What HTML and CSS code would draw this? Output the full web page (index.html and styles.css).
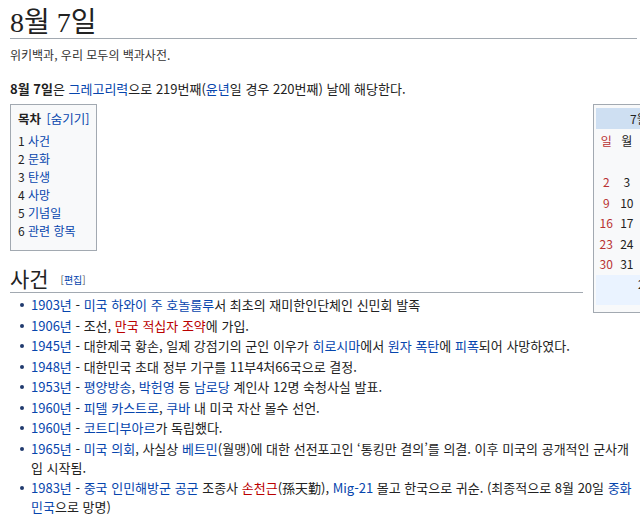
FILE: index.html
```html
<!DOCTYPE html>
<html lang="ko">

<head>
    <meta charset="utf-8">
    <title>8월 7일 - 위키백과</title>
    <link rel="stylesheet" href="styles.css">
</head>

<body>
    <div class="content">
        <h1 class="page-title">8월 7일</h1>
        <div class="tagline">위키백과, 우리 모두의 백과사전.</div>

        <p class="lead"><b>8월 7일</b>은 <a href="#">그레고리력</a>으로 219번째(<a href="#">윤년</a>일 경우 220번째) 날에 해당한다.</p>

        <table class="calendar">
            <thead>
                <tr>
                    <th colspan="7" class="cal-head">7월 ← 8월 → 9월</th>
                </tr>
                <tr class="weekdays">
                    <th class="sun">일</th><th>월</th><th>화</th><th>수</th><th>목</th><th>금</th><th>토</th>
                </tr>
            </thead>
            <tbody>
                <tr><td></td><td></td><td></td><td></td><td></td><td></td><td>1</td></tr>
                <tr><td class="sun">2</td><td>3</td><td>4</td><td>5</td><td>6</td><td>7</td><td>8</td></tr>
                <tr><td class="sun">9</td><td>10</td><td>11</td><td>12</td><td>13</td><td>14</td><td>15</td></tr>
                <tr><td class="sun">16</td><td>17</td><td>18</td><td>19</td><td>20</td><td>21</td><td>22</td></tr>
                <tr><td class="sun">23</td><td>24</td><td>25</td><td>26</td><td>27</td><td>28</td><td>29</td></tr>
                <tr><td class="sun">30</td><td>31</td><td></td><td></td><td></td><td></td><td></td></tr>
            </tbody>
            <tfoot>
                <tr>
                    <td colspan="7" class="cal-foot">2020년</td>
                </tr>
            </tfoot>
        </table>

        <div class="toc">
            <div class="toc-title"><b>목차</b> <a href="#">[숨기기]</a></div>
            <ul>
                <li><span class="num">1</span> <a href="#">사건</a></li>
                <li><span class="num">2</span> <a href="#">문화</a></li>
                <li><span class="num">3</span> <a href="#">탄생</a></li>
                <li><span class="num">4</span> <a href="#">사망</a></li>
                <li><span class="num">5</span> <a href="#">기념일</a></li>
                <li><span class="num">6</span> <a href="#">관련 항목</a></li>
            </ul>
        </div>

        <h2 class="section">사건 <span class="edit">[<a href="#">편집</a>]</span></h2>
        <ul class="events">
            <li><a href="#">1903년</a> - <a href="#">미국 하와이 주</a> <a href="#">호놀룰루</a>서 최초의 재미한인단체인 신민회 발족</li>
            <li><a href="#">1906년</a> - 조선, <a href="#" class="new">만국 적십자 조약</a>에 가입.</li>
            <li><a href="#">1945년</a> - 대한제국 황손, 일제 강점기의 군인 이우가 <a href="#">히로시마</a>에서 <a href="#">원자 폭탄</a>에 <a href="#">피폭</a>되어 사망하였다.</li>
            <li><a href="#">1948년</a> - 대한민국 초대 정부 기구를 11부4처66국으로 결정.</li>
            <li><a href="#">1953년</a> - <a href="#">평양방송</a>, <a href="#">박헌영</a> 등 <a href="#">남로당</a> 계인사 12명 숙청사실 발표.</li>
            <li><a href="#">1960년</a> - <a href="#">피델 카스트로</a>, <a href="#">쿠바</a> 내 미국 자산 몰수 선언.</li>
            <li><a href="#">1960년</a> - <a href="#">코트디부아르</a>가 독립했다.</li>
            <li><a href="#">1965년</a> - <a href="#">미국 의회</a>, 사실상 <a href="#">베트민</a>(월맹)에 대한 선전포고인 ‘통킹만 결의’를 의결. 이후 미국의 공개적인 군사개입 시작됨.</li>
            <li><a href="#">1983년</a> - <a href="#">중국 인민해방군 공군</a> 조종사 <a href="#" class="new">손천근</a>(孫天勤), <a href="#">Mig-21</a> 몰고 한국으로 귀순. (최종적으로 8월 20일 <a href="#">중화민국</a>으로 망명)</li>
        </ul>
    </div>
</body>

</html>
```

FILE: styles.css
```css
html,
body {
    margin: 0;
    padding: 0;
    overflow: hidden;
    background: #fff;
}

body {
    font-family: "Noto Sans CJK KR", sans-serif;
    font-size: 13px;
    color: #222;
}

a {
    color: #0645ad;
    text-decoration: none;
}

a.new {
    color: #ba0000;
}

.content {
    width: 627px;
    padding-left: 10px;
}

.page-title {
    font-family: "Liberation Serif", "Noto Sans CJK KR", serif;
    font-weight: normal;
    font-size: 28px;
    line-height: 31px;
    margin: 0;
    padding-top: 7px;
    border-bottom: 1px solid #a2a9b1;
}

.tagline {
    font-size: 12px;
    line-height: 18px;
    margin-top: 7px;
    color: #333;
}

.lead {
    margin: 15px 0 5px;
    line-height: 20px;
}

/* calendar box, sticks out of the viewport on the right */
.calendar {
    float: right;
    width: 150px;
    margin: 0 -106px 0 10px;
    border: 1px solid #a2a9b1;
    background: #f8f9fa;
    border-collapse: separate;
    border-spacing: 0;
    padding: 3px 2px 7px;
    font-size: 12px;
    table-layout: fixed;
}

.calendar th,
.calendar td {
    padding: 0;
    text-align: center;
    font-weight: normal;
    height: 20.5px;
    line-height: 20px;
}

.calendar .cal-head {
    background: #cedff2;
    height: 21px;
    text-align: left;
    padding-left: 34px;
    border-bottom: 2px solid #f8f9fa;
}

.calendar .sun {
    color: #b83232;
}

.calendar .cal-foot {
    background: #eaf3ff;
    height: 30px;
    text-align: left;
    padding-left: 42px;
    vertical-align: top;
    line-height: 18px;
}

.toc {
    width: max-content;
    white-space: nowrap;
    padding: 5px 7px 10px;
    border: 1px solid #a2a9b1;
    background: #f8f9fa;
    font-size: 12px;
    line-height: 18px;
}

.toc-title {
    margin-bottom: 4px;
    font-size: 12.5px;
}

.toc-title a {
    margin-left: 2px;
}

.toc ul {
    list-style: none;
    margin: 0;
    padding: 0;
}

.toc .num {
    color: #222;
}

.section {
    overflow: hidden;
    font-weight: normal;
    font-size: 21px;
    line-height: 24px;
    margin: 15px 0 0;
    border-bottom: 1px solid #a2a9b1;
}

.section .edit {
    font-size: 10px;
    color: #54595d;
    margin-left: 6px;
    vertical-align: 3px;
}

.events {
    list-style: none;
    margin: 2px 0 0;
    padding: 0 0 0 21px;
    line-height: 19px;
}

.events li {
    position: relative;
    margin-bottom: 1.5px;
}

.events li::before {
    content: "";
    position: absolute;
    left: -11px;
    top: 8px;
    width: 4px;
    height: 4px;
    border-radius: 50%;
    background: #203a6e;
}
```
